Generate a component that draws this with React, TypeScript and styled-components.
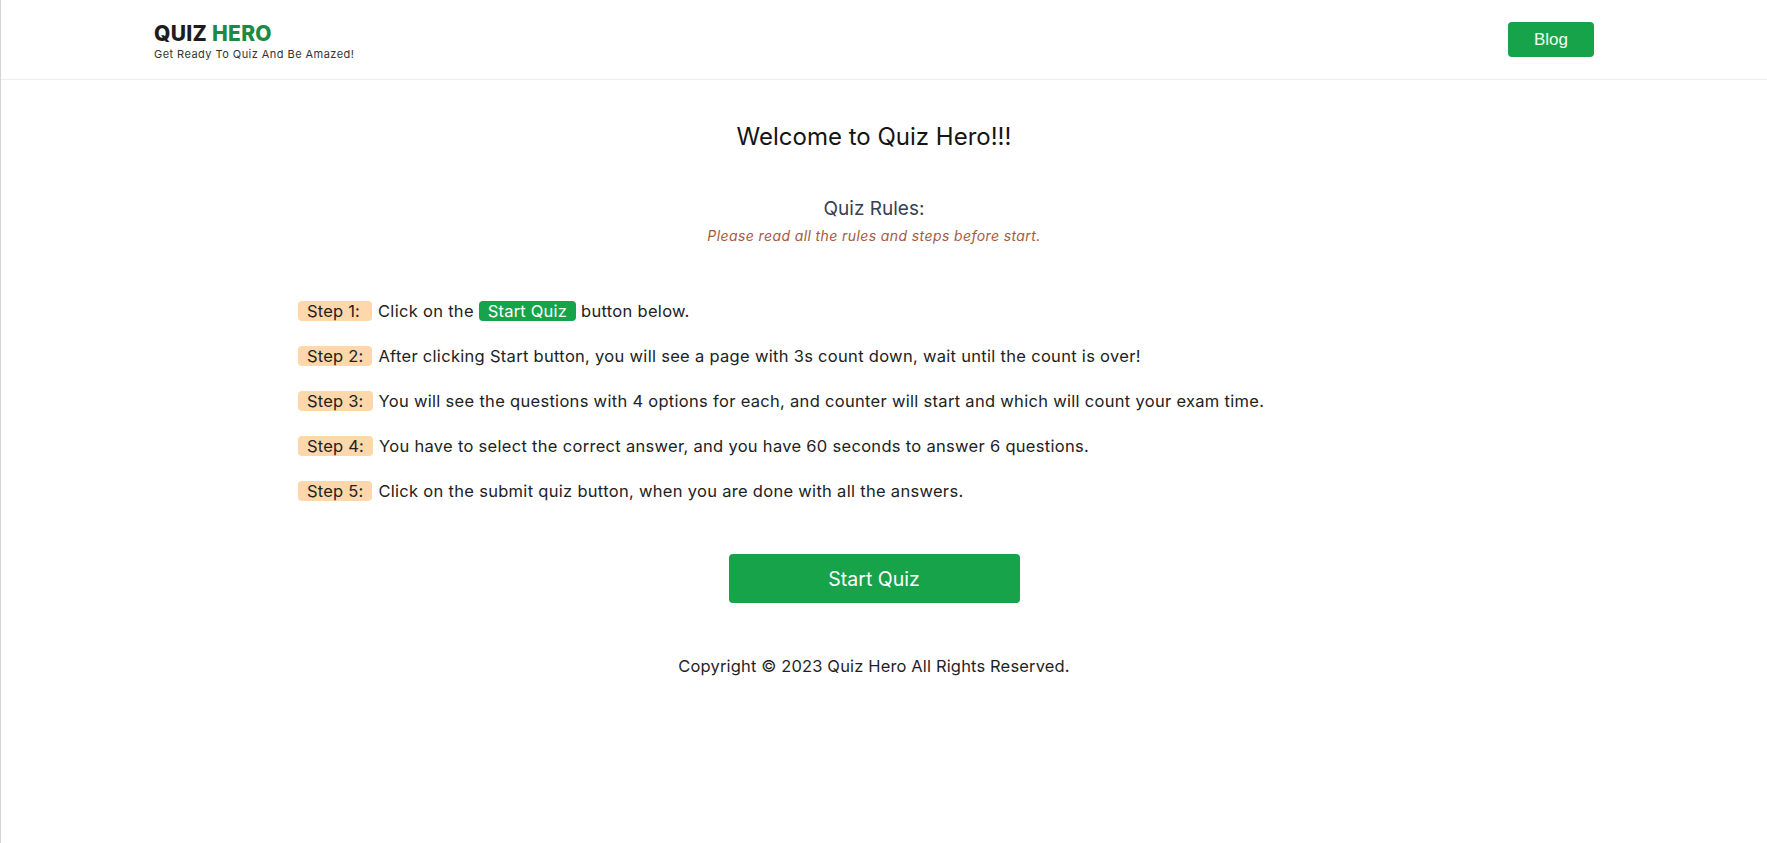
import React from "react";
import styled, { createGlobalStyle } from "styled-components";

const Global = createGlobalStyle`
  html, body { margin: 0; padding: 0; background: #fff; }
  body {
    font-family: "Inter", "Roboto", sans-serif;
    color: #1f2328;
    border-left: 1px solid #d4d4d4;
    min-height: 843px;
    box-sizing: border-box;
  }
  * { box-sizing: border-box; }
`;

const Page = styled.div`
  padding-right: 20px;
`;

const HeaderBar = styled.header`
  border-bottom: 1px solid #eeeeee;
  margin-right: -20px;
  padding-right: 20px;
`;

const HeaderInner = styled.div`
  max-width: 1440px;
  margin: 0 auto;
  height: 79px;
  display: flex;
  align-items: center;
  justify-content: space-between;
`;

const Brand = styled.div`
  display: flex;
  flex-direction: column;
  padding-top: 4px;
`;

const Logo = styled.h1`
  margin: 0;
  font-size: 21px;
  font-weight: 800;
  line-height: 22px;
  color: #1d1d1d;
  letter-spacing: 0.3px;
`;

const LogoAccent = styled.span`
  color: #1d8a3f;
`;

const Tagline = styled.p`
  margin: 3px 0 0;
  font-size: 11px;
  letter-spacing: 0.45px;
  color: #333;
  line-height: 13px;
`;

const BlogButton = styled.button`
  width: 86px;
  height: 35px;
  border: none;
  border-radius: 4px;
  background: #17a34a;
  color: #f1fff4;
  font-family: "Liberation Sans", Arial, sans-serif;
  font-size: 17px;
  cursor: pointer;
`;

const Main = styled.main`
  display: flex;
  flex-direction: column;
  align-items: center;
  padding-top: 42px;
`;

const Title = styled.h2`
  margin: 0;
  font-size: 24px;
  font-weight: 400;
  line-height: 30px;
  color: #151515;
`;

const RulesTitle = styled.h3`
  margin: 45px 0 0;
  font-size: 19px;
  font-weight: 400;
  line-height: 24px;
  color: #374151;
`;

const Note = styled.p`
  margin: 6px 0 0;
  font-size: 14px;
  letter-spacing: 0.4px;
  font-style: italic;
  color: #a65a3c;
`;

const Steps = styled.ol`
  list-style: none;
  margin: 57px 0 0;
  padding: 0;
  align-self: flex-start;
  margin-left: 297px;
  display: flex;
  flex-direction: column;
  gap: 25px;
`;

const Step = styled.li`
  display: flex;
  align-items: center;
  gap: 6px;
  font-size: 16.5px;
  letter-spacing: 0.3px;
  line-height: 20px;
  color: #222;
`;

const Badge = styled.span<{ $green?: boolean }>`
  display: inline-block;
  padding: 0 9px 0 9px;
  min-width: ${(p) => (p.$green ? "auto" : "74px")};
  height: 20px;
  line-height: 20px;
  border-radius: 4px;
  letter-spacing: 0.2px;
  background: ${(p) => (p.$green ? "#17a34a" : "#fed7aa")};
  color: ${(p) => (p.$green ? "#fff" : "#222")};
`;

const StartButton = styled.button`
  margin-top: 53px;
  width: 291px;
  height: 49px;
  border: none;
  border-radius: 4px;
  background: #17a34a;
  color: #fff;
  font-family: inherit;
  font-size: 19.5px;
  cursor: pointer;
`;

const Footer = styled.footer`
  margin-top: 53px;
  font-size: 16.5px;
  letter-spacing: 0.15px;
  color: #1f1f1f;
`;

const steps: { label: string; content: React.ReactNode }[] = [
  {
    label: "Step 1:",
    content: (
      <>
        Click on the <Badge $green>Start Quiz</Badge> button below.
      </>
    ),
  },
  {
    label: "Step 2:",
    content:
      "After clicking Start button, you will see a page with 3s count down, wait until the count is over!",
  },
  {
    label: "Step 3:",
    content:
      "You will see the questions with 4 options for each, and counter will start and which will count your exam time.",
  },
  {
    label: "Step 4:",
    content:
      "You have to select the correct answer, and you have 60 seconds to answer 6 questions.",
  },
  {
    label: "Step 5:",
    content: "Click on the submit quiz button, when you are done with all the answers.",
  },
];

export default function App() {
  return (
    <Page>
      <Global />
      <HeaderBar>
        <HeaderInner>
          <Brand>
            <Logo>
              QUIZ <LogoAccent>HERO</LogoAccent>
            </Logo>
            <Tagline>Get Ready To Quiz And Be Amazed!</Tagline>
          </Brand>
          <BlogButton>Blog</BlogButton>
        </HeaderInner>
      </HeaderBar>
      <Main>
        <Title>Welcome to Quiz Hero!!!</Title>
        <RulesTitle>Quiz Rules:</RulesTitle>
        <Note>Please read all the rules and steps before start.</Note>
        <Steps>
          {steps.map((s) => (
            <Step key={s.label}>
              <Badge>{s.label}</Badge>
              <span>{s.content}</span>
            </Step>
          ))}
        </Steps>
        <StartButton>Start Quiz</StartButton>
        <Footer>Copyright © 2023 Quiz Hero All Rights Reserved.</Footer>
      </Main>
    </Page>
  );
}
